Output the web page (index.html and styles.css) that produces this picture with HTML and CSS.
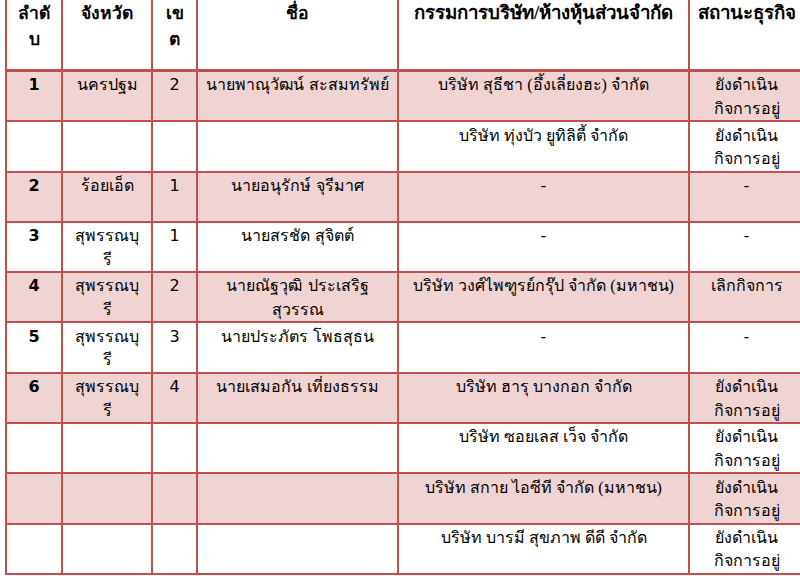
FILE: index.html
```html
<!DOCTYPE html>
<html lang="th">
<head>
<meta charset="utf-8">
<link rel="stylesheet" href="styles.css">
</head>
<body>
<table class="tbl">
  <colgroup>
    <col class="c1"><col class="c2"><col class="c3"><col class="c4"><col class="c5"><col class="c6">
  </colgroup>
  <thead>
    <tr>
      <th>ลำดั<br>บ</th>
      <th>จังหวัด</th>
      <th>เข<br>ต</th>
      <th>ชื่อ</th>
      <th class="serif">กรรมการบริษัท/ห้างหุ้นส่วนจำกัด</th>
      <th class="serif">สถานะธุรกิจ</th>
    </tr>
  </thead>
  <tbody>
    <tr class="pink">
      <td class="num">1</td><td>นครปฐม</td><td class="zone">2</td><td>นายพาณุวัฒน์ สะสมทรัพย์</td>
      <td class="serif">บริษัท สุธีชา (อึ้งเลี่ยงฮะ) จำกัด</td><td class="serif">ยังดำเนิน<br>กิจการอยู่</td>
    </tr>
    <tr>
      <td></td><td></td><td></td><td></td>
      <td class="serif">บริษัท ทุ่งบัว ยูทิลิตี้ จำกัด</td><td class="serif">ยังดำเนิน<br>กิจการอยู่</td>
    </tr>
    <tr class="pink">
      <td class="num">2</td><td>ร้อยเอ็ด</td><td class="zone">1</td><td>นายอนุรักษ์ จุรีมาศ</td>
      <td class="serif">-</td><td class="serif">-</td>
    </tr>
    <tr>
      <td class="num">3</td><td>สุพรรณบุ<br>รี</td><td class="zone">1</td><td>นายสรชัด สุจิตต์</td>
      <td class="serif">-</td><td class="serif">-</td>
    </tr>
    <tr class="pink">
      <td class="num">4</td><td>สุพรรณบุ<br>รี</td><td class="zone">2</td><td>นายณัฐวุฒิ ประเสริฐ<br>สุวรรณ</td>
      <td class="serif">บริษัท วงศ์ไพฑูรย์กรุ๊ป จำกัด (มหาชน)</td><td class="serif">เลิกกิจการ</td>
    </tr>
    <tr>
      <td class="num">5</td><td>สุพรรณบุ<br>รี</td><td class="zone">3</td><td>นายประภัตร โพธสุธน</td>
      <td class="serif">-</td><td class="serif">-</td>
    </tr>
    <tr class="pink">
      <td class="num">6</td><td>สุพรรณบุ<br>รี</td><td class="zone">4</td><td>นายเสมอกัน เที่ยงธรรม</td>
      <td class="serif">บริษัท ฮารุ บางกอก จำกัด</td><td class="serif">ยังดำเนิน<br>กิจการอยู่</td>
    </tr>
    <tr>
      <td></td><td></td><td></td><td></td>
      <td class="serif">บริษัท ซอยเลส เว็จ จำกัด</td><td class="serif">ยังดำเนิน<br>กิจการอยู่</td>
    </tr>
    <tr class="pink">
      <td></td><td></td><td></td><td></td>
      <td class="serif">บริษัท สกาย ไอซีที จำกัด (มหาชน)</td><td class="serif">ยังดำเนิน<br>กิจการอยู่</td>
    </tr>
    <tr>
      <td></td><td></td><td></td><td></td>
      <td class="serif">บริษัท บารมี สุขภาพ ดีดี จำกัด</td><td class="serif">ยังดำเนิน<br>กิจการอยู่</td>
    </tr>
  </tbody>
</table>
</body>
</html>
```

FILE: styles.css
```css
html, body {
  margin: 0;
  padding: 0;
  background: #ffffff;
}
body {
  padding-left: 5px;
  overflow: hidden;
  font-family: "DejaVu Sans", sans-serif;
  color: #000000;
}
.tbl {
  border-collapse: collapse;
  table-layout: fixed;
  width: 798px;
}
.c1 { width: 56px; }
.c2 { width: 90px; }
.c3 { width: 45px; }
.c4 { width: 201px; }
.c5 { width: 291px; }
.c6 { width: 115px; }
.tbl th, .tbl td {
  border: 2px solid #c0504d;
  text-align: center;
  vertical-align: top;
  padding: 0 2px;
  font-size: 16px;
  line-height: 23.5px;
}
.tbl th {
  height: 69px;
  font-weight: bold;
  font-size: 17.5px;
  line-height: 26px;
  padding-top: 0;
  border-top: none;
  border-bottom-width: 3px;
}
.tbl th.serif {
  font-size: 18.7px;
}
.tbl td {
  height: 47px;
  padding-top: 1.3px;
}
.pink td {
  background: #f0d3d3;
}
.num {
  font-weight: bold;
  font-size: 20px;
}
.zone {
  font-size: 20px;
}
.serif {
  font-family: "Liberation Serif", serif;
  font-size: 18px;
}
```
